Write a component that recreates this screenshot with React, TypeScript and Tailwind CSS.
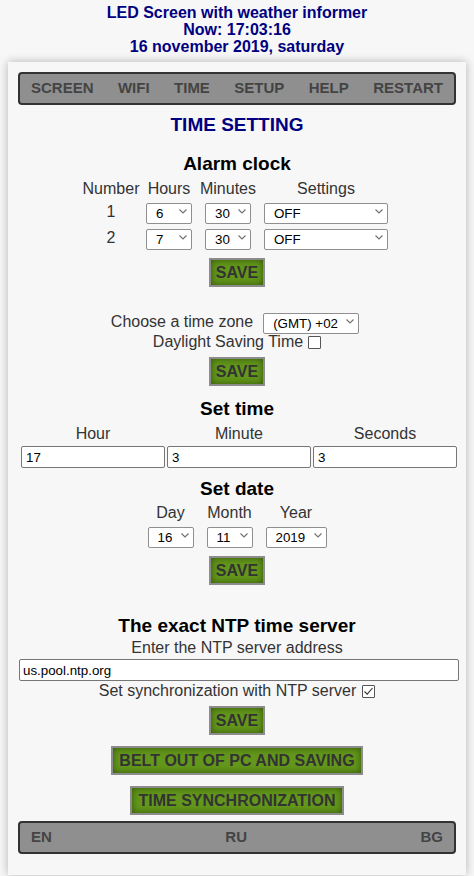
import React from 'react';

function Select({ value, className }: { value: string; className: string }) {
  return (
    <div className={`relative h-[21px] ${className}`}>
      <select
        defaultValue={value}
        className="w-full h-full appearance-none bg-white border border-[#8f8f8f] rounded-[2px] pl-[9px] text-[13.33px] text-black outline-none"
      >
        <option>{value}</option>
      </select>
      <svg
        className="absolute right-[5px] top-[8px] pointer-events-none"
        width="8"
        height="5"
        viewBox="0 0 8 5"
      >
        <path d="M0.5 0.5L4 4L7.5 0.5" stroke="#6f6f6f" strokeWidth="1.1" fill="none" />
      </svg>
    </div>
  );
}

function Checkbox({ checked }: { checked?: boolean }) {
  return (
    <span className="w-[13px] h-[13px] border border-[#555] rounded-[1px] bg-white flex items-center justify-center shrink-0">
      {checked && (
        <svg width="11" height="11" viewBox="0 0 11 11">
          <path d="M1.5 5.5L4.2 8.2L9.5 2" stroke="#333" strokeWidth="1.1" fill="none" />
        </svg>
      )}
    </span>
  );
}

function GreenButton({ children, className = '' }: { children: React.ReactNode; className?: string }) {
  return (
    <button
      className={`h-[29px] px-[5px] border-2 border-[#8c8c8c] bg-[#63971b] shadow-[inset_0_0_7px_rgba(35,60,0,0.75)] text-[16px] leading-[19px] font-bold text-[#333] ${className}`}
    >
      {children}
    </button>
  );
}

function Heading({ children, className = '' }: { children: React.ReactNode; className?: string }) {
  return <div className={`text-[19px] leading-[22px] font-bold text-black ${className}`}>{children}</div>;
}

const NAV = ['SCREEN', 'WIFI', 'TIME', 'SETUP', 'HELP', 'RESTART'];

export default function App() {
  return (
    <div
      className="min-h-screen bg-[#f7f7f7] text-[16px] text-[#333]"
      style={{ fontFamily: '"Liberation Sans", Arial, sans-serif' }}
    >
      {/* Top header */}
      <div className="pt-[4px] text-center text-[16px] leading-[17px] font-bold text-[#000080]">
        <div>LED Screen with weather informer</div>
        <div>Now: 17:03:16</div>
        <div>16 november 2019, saturday</div>
      </div>

      <div className="mx-[8px] mt-[7px] bg-[#f7f7f7] shadow-[0_0_9px_rgba(0,0,0,0.28)] px-[10px] pt-[10px] pb-[21px] flex flex-col items-center">
        {/* Menu */}
        <div className="w-full h-[33px] border-2 border-[#333] rounded-[4px] bg-[#8f8f8f] flex items-center justify-between px-[11px] text-[15px] font-bold text-[#444]">
          {NAV.map((n) => (
            <span key={n}>{n}</span>
          ))}
        </div>

        <div className="mt-[9px] text-[19px] leading-[22px] font-bold text-[#000080]">TIME SETTING</div>

        {/* Alarm clock */}
        <Heading className="mt-[17px]">Alarm clock</Heading>
        <div className="mt-[5px] flex flex-col">
          <div className="flex h-[18px] leading-[18px]">
            <div className="w-[60px] text-center">Number</div>
            <div className="w-[56px] text-center">Hours</div>
            <div className="w-[62px] text-center">Minutes</div>
            <div className="w-[134px] text-center">Settings</div>
          </div>
          {[
            ['1', '6'],
            ['2', '7'],
          ].map(([num, h], i) => (
            <div key={num} className={`flex items-center ${i === 0 ? 'mt-[3px]' : 'mt-[5px]'}`}>
              <div className="w-[60px] text-center leading-[18px]">{num}</div>
              <div className="w-[56px] flex justify-center">
                <Select value={h} className="w-[46px]" />
              </div>
              <div className="w-[62px] flex justify-center">
                <Select value="30" className="w-[46px]" />
              </div>
              <div className="w-[134px] flex justify-center">
                <Select value="OFF" className="w-[124px]" />
              </div>
            </div>
          ))}
        </div>
        <GreenButton className="mt-[10px]">SAVE</GreenButton>

        {/* Time zone */}
        <div className="mt-[24px] mr-[4px] flex items-center gap-[10px]">
          <span className="leading-[18px]">Choose a time zone</span>
          <Select value="(GMT) +02" className="w-[96px]" />
        </div>
        <div className="mt-[1px] h-[18px] flex items-center gap-[5px]">
          <span className="leading-[18px]">Daylight Saving Time</span>
          <Checkbox />
        </div>
        <GreenButton className="mt-[6px]">SAVE</GreenButton>

        {/* Set time */}
        <Heading className="mt-[12px]">Set time</Heading>
        <div className="mt-[5px] w-[436px] ml-[4px] grid grid-cols-3 gap-x-[2px]">
          {['Hour', 'Minute', 'Seconds'].map((l) => (
            <div key={l} className="text-center leading-[18px]">
              {l}
            </div>
          ))}
          {['17', '3', '3'].map((v, i) => (
            <input
              key={i}
              defaultValue={v}
              className="mt-[3px] w-full h-[22px] bg-white border border-[#767676] rounded-[2px] pl-[4px] text-[13.33px] text-black outline-none"
            />
          ))}
        </div>

        {/* Set date */}
        <Heading className="mt-[10px]">Set date</Heading>
        <div className="mt-[4px] flex gap-[13px]">
          {[
            ['Day', '16', 'w-[46px]'],
            ['Month', '11', 'w-[46px]'],
            ['Year', '2019', 'w-[61px]'],
          ].map(([l, v, w]) => (
            <div key={l} className="flex flex-col items-center">
              <span className="leading-[18px]">{l}</span>
              <Select value={v} className={`mt-[3px] ${w}`} />
            </div>
          ))}
        </div>
        <GreenButton className="mt-[10px]">SAVE</GreenButton>

        {/* NTP */}
        <Heading className="mt-[30px]">The exact NTP time server</Heading>
        <div className="mt-[2px] leading-[18px]">Enter the NTP server address</div>
        <input
          defaultValue="us.pool.ntp.org"
          className="mt-[2px] w-[440px] ml-[4px] h-[22px] bg-white border border-[#767676] rounded-[2px] pl-[3px] text-[13.33px] text-black outline-none"
        />
        <div className="mt-[1px] h-[18px] flex items-center gap-[6px]">
          <span className="leading-[18px]">Set synchronization with NTP server</span>
          <Checkbox checked />
        </div>
        <GreenButton className="mt-[6px]">SAVE</GreenButton>
        <GreenButton className="mt-[11px] px-[6px]">BELT OUT OF PC AND SAVING</GreenButton>
        <GreenButton className="mt-[11px] px-[6px]">TIME SYNCHRONIZATION</GreenButton>

        {/* Languages */}
        <div className="mt-[6px] w-full h-[33px] border-2 border-[#333] rounded-[4px] bg-[#8f8f8f] flex items-center justify-between px-[11px] text-[15px] font-bold text-[#444]">
          <span>EN</span>
          <span>RU</span>
          <span>BG</span>
        </div>
      </div>
    </div>
  );
}
